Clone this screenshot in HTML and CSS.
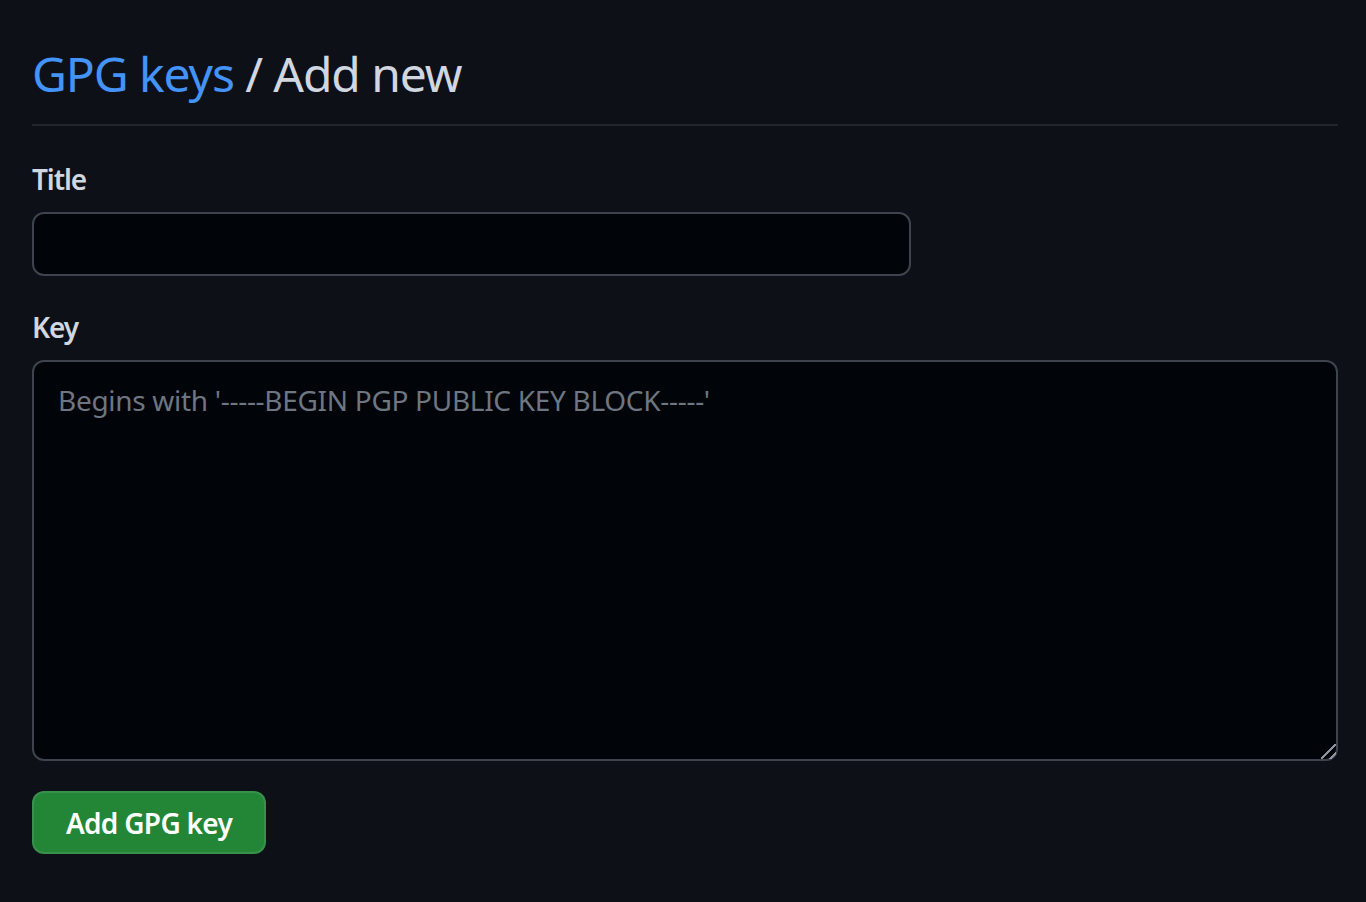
FILE: index.html
```html
<!DOCTYPE html>
<html lang="en">
<head>
<meta charset="utf-8">
<title>GPG keys / Add new</title>
<link rel="stylesheet" href="styles.css">
</head>
<body>
<main class="page">
  <div class="subhead">
    <h2 class="subhead-heading"><a class="crumb" href="#">GPG keys</a> / Add new</h2>
  </div>
  <form class="form">
    <div class="form-group">
      <label class="label" for="title">Title</label>
      <input class="input" id="title" type="text">
    </div>
    <div class="form-group">
      <label class="label" for="key">Key</label>
      <textarea class="textarea" id="key" placeholder="Begins with '-----BEGIN PGP PUBLIC KEY BLOCK-----'"></textarea>
    </div>
    <button class="btn-primary" type="button">Add GPG key</button>
  </form>
</main>
</body>
</html>
```
FILE: styles.css
```css
* { box-sizing: border-box; }
html, body {
  margin: 0;
  background: #0d1117;
  color: #e6edf3;
  font-family: "Noto Sans", "Open Sans", sans-serif;
}
.page {
  padding: 38px 28px 0 32px;
}
.subhead {
  padding-bottom: 14px;
  border-bottom: 2px solid #21262d;
}
.subhead-heading {
  margin: 0;
  font-size: 48px;
  line-height: 72px;
  font-weight: 400;
  letter-spacing: -1.1px;
  color: #d1d7e0;
}
.crumb {
  color: #4493f8;
  text-decoration: none;
}
.form-group {
  display: flex;
  flex-direction: column;
  align-items: flex-start;
}
.form-group:first-child { margin-top: 33px; }
.form-group + .form-group { margin-top: 31px; }
.label {
  font-size: 28px;
  line-height: 40px;
  font-weight: 600;
  letter-spacing: -1.1px;
  color: #d1d7e0;
  margin-bottom: 13px;
}
.input, .textarea {
  background: #010409;
  border: 2px solid #3d444d;
  border-radius: 12px;
  color: #e6edf3;
  font-family: inherit;
  font-size: 28px;
  outline: none;
  color-scheme: dark;
}
.input {
  width: 879px;
  height: 64px;
  padding: 0 24px;
}
.textarea {
  width: 100%;
  height: 401px;
  padding: 18px 24px;
  line-height: 40px;
  letter-spacing: -0.3px;
  resize: vertical;
}
.textarea::-webkit-resizer {
  background: linear-gradient(135deg,
    transparent 0 46%, #8b949e 46% 56%,
    transparent 56% 76%, #8b949e 76% 86%,
    transparent 86%);
}
.textarea::placeholder { color: #6e7681; }
.btn-primary {
  margin-top: 30px;
  height: 63px;
  width: 234px;
  background: #238636;
  border: 2px solid rgba(240, 246, 252, 0.1);
  border-radius: 12px;
  color: #ffffff;
  font-family: inherit;
  font-size: 28px;
  font-weight: 600;
  letter-spacing: -0.7px;
  padding: 0;
  cursor: pointer;
}
```
